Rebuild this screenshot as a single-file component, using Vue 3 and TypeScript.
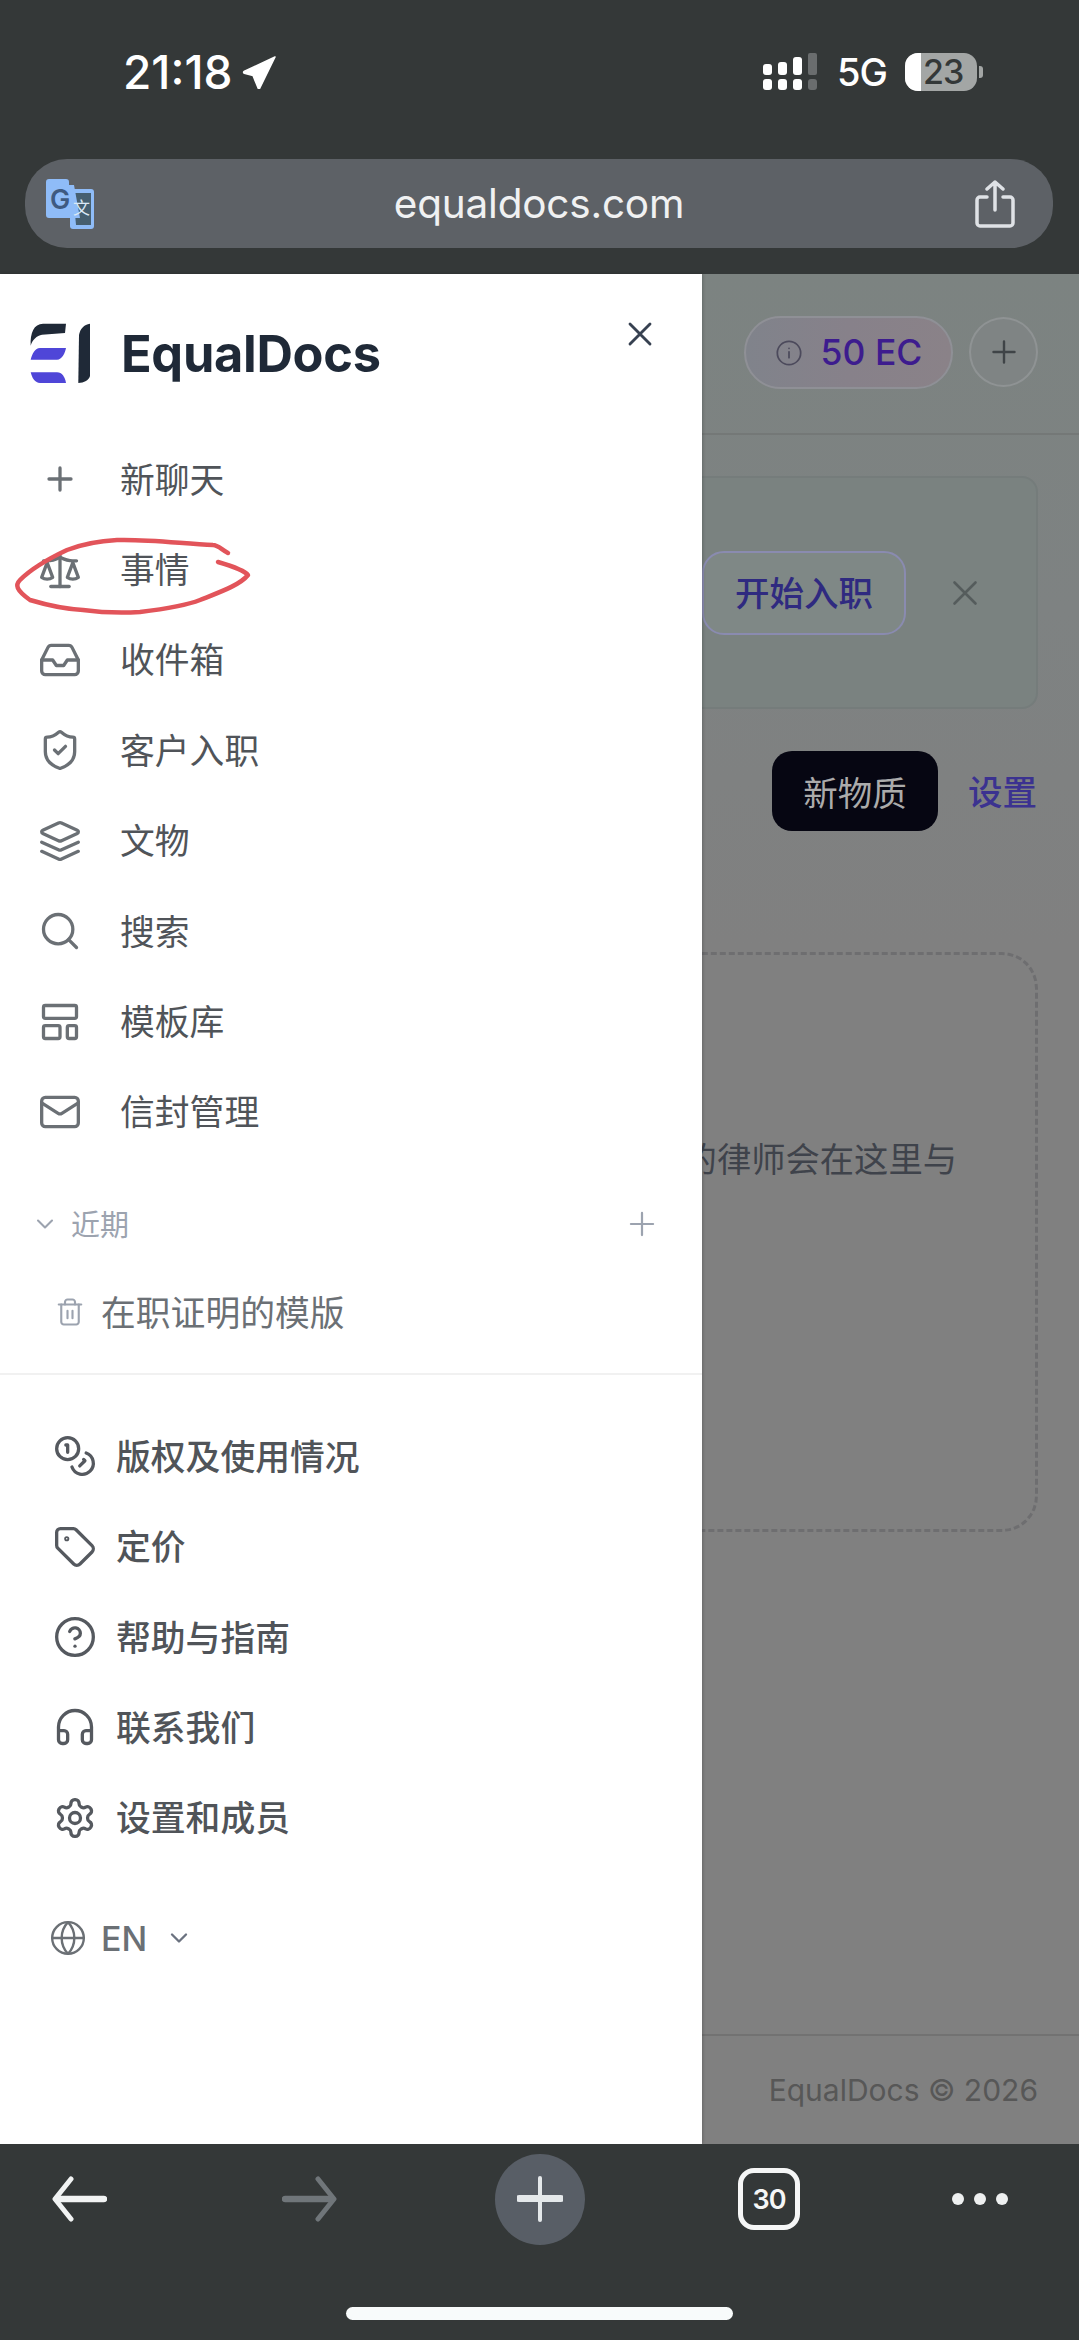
<template>
  <div class="shell">
    <header class="chrome-top">
      <div class="status">
        <div class="status-left">
          <span class="time">21:18</span>
          <svg class="loc" viewBox="0 0 34 33"><path d="M33 1 2 15.500a1 1 0 0 0 .3 1.800L11 19.500l5.200 12.800a.8.8 0 0 0 1.500-.1z" fill="#fff" stroke="#fff" stroke-width="1.500" stroke-linejoin="round" /></svg>
        </div>
        <div class="status-right">
          <svg class="signal" viewBox="0 0 54 38">
            <g fill="#fff">
              <rect x="0" y="11" width="9" height="11" rx="3" />
              <rect x="15" y="9" width="9" height="13" rx="3" />
              <rect x="30" y="4" width="9" height="18" rx="3" />
              <rect x="0" y="26" width="9" height="11" rx="3" />
              <rect x="15" y="26" width="9" height="11" rx="3" />
              <rect x="30" y="26" width="9" height="11" rx="3" />
            </g>
            <g fill="#6a6d6e">
              <rect x="45" y="0" width="9" height="22" rx="2" />
              <rect x="45" y="26" width="9" height="11" rx="3" />
            </g>
          </svg>
          <span class="net">5G</span>
          <div class="battery">
            <div class="battery-body"><span class="battery-fill"></span><span class="battery-num">23</span></div>
            <span class="battery-nub"></span>
          </div>
        </div>
      </div>
      <div class="urlbar">
        <svg class="translate" viewBox="0 0 48 50">
          <path d="M24 10h21a3 3 0 0 1 3 3v34a3 3 0 0 1-3 3H27a3 3 0 0 1-3-3z" fill="#8fbcf8" />
          <path d="M27 14h18v32H30z" fill="#465f70" />
          <path d="M3 0h17a3 3 0 0 1 3 3v3h5l6 33H3a3 3 0 0 1-3-3V3a3 3 0 0 1 3-3z" fill="#8fbcf8" />
          <text x="4" y="30" class="translate-g">G</text>
          <text x="27" y="35" class="translate-w">文</text>
        </svg>
        <span class="url">equaldocs.com</span>
        <svg class="share" viewBox="0 0 40 48" fill="none" stroke="#dfe2e6" stroke-width="3.500" stroke-linecap="round" stroke-linejoin="round">
          <path d="M12 17H5a3 3 0 0 0-3 3v23a3 3 0 0 0 3 3h30a3 3 0 0 0 3-3V20a3 3 0 0 0-3-3h-7" />
          <path d="M20 30V2M12 9l8-7 8 7" />
        </svg>
      </div>
    </header>

    <div class="stage">
      <main class="page">
        <div class="page-head">
          <div class="credits">
            <svg class="info" viewBox="0 0 24 24" fill="none" stroke="#4c4a5c" stroke-width="1.500" stroke-linecap="round">
              <path :d="circle(12, 12, 10)" />
              <path d="M12 16v-5M12 8h.01" />
            </svg>
            <span>50 EC</span>
          </div>
          <button class="round-add">
            <svg viewBox="0 0 24 24" fill="none" stroke="#3f4447" stroke-width="1.600" stroke-linecap="round"><path d="M5 12h14M12 5v14" /></svg>
          </button>
        </div>

        <section class="banner">
          <button class="onboard"><span>开始入职</span></button>
          <svg class="banner-x" viewBox="0 0 24 24" fill="none" stroke="#555c5c" stroke-width="1.500" stroke-linecap="round"><path d="M18 6 6 18M6 6l12 12" /></svg>
        </section>

        <div class="matter-row">
          <button class="new-matter">新物质</button>
          <span class="settings-link">设置</span>
        </div>

        <section class="empty">
          <p>您的律师会在这里与</p>
        </section>

        <footer class="page-foot">EqualDocs © 2026</footer>
      </main>

      <aside class="drawer">
        <div class="drawer-head">
          <div class="brand">
            <svg class="logo" viewBox="0 0 60 61">
              <path d="M13 .7h23L35 10l-23 1.700C7 12.500 2 17 .7 22.700 0 10 4 .7 13 .7z" fill="#1f2937" />
              <path d="M.7 36.700C2 31 5 25 10 25h26c-1 5-4 11.700-9 11.700z" fill="#4f46d8" />
              <path d="M.7 49.300H27c5 0 8 4.700 9 10.700H10C5 60 2 55 .7 49.300z" fill="#4f46d8" />
              <path d="M60 .7V53c-1 4-6 7-11.700 7L49 12C50 6 54 1.500 60 .7z" fill="#1f2937" />
            </svg>
            <span class="brand-name">EqualDocs</span>
          </div>
          <svg class="close" viewBox="0 0 24 24" fill="none" stroke="#374151" stroke-width="1.700" stroke-linecap="round"><path d="M18 6 6 18M6 6l12 12" /></svg>
        </div>

        <nav class="nav">
          <a v-for="item in mainNav" :key="item.label" class="nav-row">
            <svg class="nav-icon" viewBox="0 0 24 24" fill="none" stroke="#6b7075" stroke-width="1.800" stroke-linecap="round" stroke-linejoin="round">
              <path v-for="d in item.icon" :key="d" :d="d" />
            </svg>
            <span>{{ item.label }}</span>
          </a>
        </nav>

        <div class="recent-head">
          <svg class="recent-chev" viewBox="0 0 24 24" fill="none" stroke="#9ca3af" stroke-width="1.800" stroke-linecap="round" stroke-linejoin="round"><path d="m6 9 6 6 6-6" /></svg>
          <span>近期</span>
          <svg class="recent-add" viewBox="0 0 24 24" fill="none" stroke="#9ca3af" stroke-width="1.400" stroke-linecap="round"><path d="M5 12h14M12 5v14" /></svg>
        </div>
        <div class="recent-item">
          <svg class="trash" viewBox="0 0 24 24" fill="none" stroke="#9ca3af" stroke-width="1.700" stroke-linecap="round" stroke-linejoin="round">
            <path v-for="d in icons.trash" :key="d" :d="d" />
          </svg>
          <span>在职证明的模版</span>
        </div>

        <div class="divider"></div>

        <nav class="nav-lower">
          <a v-for="item in lowerNav" :key="item.label" class="lower-row">
            <svg class="nav-icon" viewBox="0 0 24 24" fill="none" stroke="#55595f" stroke-width="1.800" stroke-linecap="round" stroke-linejoin="round">
              <path v-for="d in item.icon" :key="d" :d="d" />
            </svg>
            <span>{{ item.label }}</span>
          </a>
        </nav>

        <div class="lang">
          <svg class="globe" viewBox="0 0 24 24" fill="none" stroke="#6b7075" stroke-width="1.500" stroke-linecap="round" stroke-linejoin="round">
            <path v-for="d in icons.globe" :key="d" :d="d" />
          </svg>
          <span>EN</span>
          <svg class="lang-chev" viewBox="0 0 24 24" fill="none" stroke="#6b7280" stroke-width="2" stroke-linecap="round" stroke-linejoin="round"><path d="m6 9 6 6 6-6" /></svg>
        </div>
      </aside>

      <!-- hand-drawn annotation from the screenshot -->
      <svg class="scribble" viewBox="0 0 260 90" fill="none" stroke="#e2545a" stroke-width="4.500" stroke-linecap="round" stroke-linejoin="round">
        <path d="M228 23C222 20 218 15 213 15 185 14 150 9 117 10 98 11 80 15 67 20 50 28 30 40 20 50 15 55 16 60 30 70 50 76 65 79 83 80 105 83 122 83 140 82 165 79 185 76 200 70 220 62 240 55 248 45 245 41 235 37 218 32" />
      </svg>
    </div>

    <footer class="chrome-bottom">
      <div class="toolbar">
        <svg class="arrow" viewBox="0 0 55 46" fill="none" stroke="#f1f3f3" stroke-linecap="round" stroke-linejoin="round">
          <path d="M19 3 3 23l16 20" stroke-width="5" />
          <path d="M5 23h47" stroke-width="6.500" />
        </svg>
        <svg class="arrow" viewBox="0 0 55 46" fill="none" stroke="#70767a" stroke-linecap="round" stroke-linejoin="round">
          <path d="M36 3l16 20-16 20" stroke-width="5" />
          <path d="M3 23h47" stroke-width="6.500" />
        </svg>
        <div class="new-tab">
          <svg viewBox="0 0 46 46" stroke="#e4e8ea" stroke-linecap="round">
            <path d="M2 22.500h42" stroke-width="7" />
            <path d="M23 2v42" stroke-width="4" />
          </svg>
        </div>
        <div class="tabs">30</div>
        <div class="more"><i></i><i></i><i></i></div>
      </div>
      <div class="home-bar"></div>
    </footer>
  </div>
</template>

<script setup lang="ts">
interface NavItem {
  label: string
  icon: string[]
}

const circle = (cx: number, cy: number, r: number): string =>
  `M${cx - r} ${cy}a${r} ${r} 0 1 0 ${2 * r} 0a${r} ${r} 0 1 0 ${-2 * r} 0z`

const icons: Record<string, string[]> = {
  plus: ['M6 12h12', 'M12 6v12'],
  scale: [
    'm16 16 3-8 3 8c-.87.65-1.92 1-3 1s-2.130-.35-3-1Z',
    'm2 16 3-8 3 8c-.87.65-1.92 1-3 1s-2.130-.35-3-1Z',
    'M7 21h10',
    'M12 3v18',
    'M3 7h2c2 0 5-1 7-2 2 1 5 2 7 2h2'
  ],
  inbox: [
    'M22 12h-6l-2 3h-4l-2-3H2',
    'M5.450 5.110 2 12v6a2 2 0 0 0 2 2h16a2 2 0 0 0 2-2v-6l-3.450-6.890A2 2 0 0 0 16.760 4H7.240a2 2 0 0 0-1.790 1.110z'
  ],
  shield: [
    'M20 13c0 5-3.500 7.500-7.660 8.950a1 1 0 0 1-.67-.01C7.500 20.500 4 18 4 13V6a1 1 0 0 1 1-1c2 0 4.500-1.200 6.240-2.720a1.170 1.170 0 0 1 1.520 0C14.510 3.810 17 5 19 5a1 1 0 0 1 1 1z',
    'm9 12 2 2 4-4'
  ],
  layers: [
    'm12.830 2.180a2 2 0 0 0-1.660 0L2.600 6.080a1 1 0 0 0 0 1.830l8.580 3.910a2 2 0 0 0 1.660 0l8.580-3.900a1 1 0 0 0 0-1.830Z',
    'm22 17.650-9.170 4.160a2 2 0 0 1-1.660 0L2 17.650',
    'm22 12.650-9.170 4.160a2 2 0 0 1-1.660 0L2 12.650'
  ],
  search: [circle(11, 11, 8), 'm21 21-4.300-4.300'],
  template: [
    'M4 3h16a1 1 0 0 1 1 1v5a1 1 0 0 1-1 1H4a1 1 0 0 1-1-1V4a1 1 0 0 1 1-1z',
    'M4 14h7a1 1 0 0 1 1 1v5a1 1 0 0 1-1 1H4a1 1 0 0 1-1-1v-5a1 1 0 0 1 1-1z',
    'M17 14h3a1 1 0 0 1 1 1v5a1 1 0 0 1-1 1h-3a1 1 0 0 1-1-1v-5a1 1 0 0 1 1-1z'
  ],
  mail: [
    'M4 4h16a2 2 0 0 1 2 2v12a2 2 0 0 1-2 2H4a2 2 0 0 1-2-2V6a2 2 0 0 1 2-2z',
    'm22 7-8.970 5.700a1.940 1.940 0 0 1-2.060 0L2 7'
  ],
  trash: [
    'M3 6h18',
    'M19 6v14c0 1-1 2-2 2H7c-1 0-2-1-2-2V6',
    'M8 6V4c0-1 1-2 2-2h4c1 0 2 1 2 2v2',
    'M10 11v6',
    'M14 11v6'
  ],
  coins: [
    circle(8, 8, 6),
    'M18.090 10.370A6 6 0 1 1 10.340 18',
    'M7 6h1v4',
    'm16.710 13.880.7.710-2.820 2.820'
  ],
  tag: [
    'M12.586 2.586A2 2 0 0 0 11.172 2H4a2 2 0 0 0-2 2v7.172a2 2 0 0 0 .586 1.414l8.704 8.704a2.426 2.426 0 0 0 3.420 0l6.580-6.580a2.426 2.426 0 0 0 0-3.420z',
    circle(7.5, 7.5, 0.5)
  ],
  help: [circle(12, 12, 10), 'M9.090 9a3 3 0 0 1 5.830 1c0 2-3 3-3 3', 'M12 17h.01'],
  headphones: [
    'M3 14h3a2 2 0 0 1 2 2v3a2 2 0 0 1-2 2H5a2 2 0 0 1-2-2v-7a9 9 0 0 1 18 0v7a2 2 0 0 1-2 2h-1a2 2 0 0 1-2-2v-3a2 2 0 0 1 2-2h3'
  ],
  settings: [
    'M12.220 2h-.44a2 2 0 0 0-2 2v.18a2 2 0 0 1-1 1.730l-.43.25a2 2 0 0 1-2 0l-.15-.08a2 2 0 0 0-2.730.73l-.22.38a2 2 0 0 0 .73 2.730l.15.1a2 2 0 0 1 1 1.720v.51a2 2 0 0 1-1 1.740l-.15.09a2 2 0 0 0-.73 2.730l.22.38a2 2 0 0 0 2.730.73l.15-.08a2 2 0 0 1 2 0l.43.25a2 2 0 0 1 1 1.730V20a2 2 0 0 0 2 2h.44a2 2 0 0 0 2-2v-.18a2 2 0 0 1 1-1.730l.43-.25a2 2 0 0 1 2 0l.15.08a2 2 0 0 0 2.730-.73l.22-.39a2 2 0 0 0-.73-2.730l-.15-.08a2 2 0 0 1-1-1.740v-.5a2 2 0 0 1 1-1.740l.15-.09a2 2 0 0 0 .73-2.730l-.22-.38a2 2 0 0 0-2.730-.73l-.15.08a2 2 0 0 1-2 0l-.43-.25a2 2 0 0 1-1-1.730V4a2 2 0 0 0-2-2z',
    circle(12, 12, 3)
  ],
  globe: [circle(12, 12, 10), 'M12 2a14.500 14.500 0 0 0 0 20 14.500 14.500 0 0 0 0-20', 'M2 12h20']
}

const mainNav: NavItem[] = [
  { label: '新聊天', icon: icons.plus },
  { label: '事情', icon: icons.scale },
  { label: '收件箱', icon: icons.inbox },
  { label: '客户入职', icon: icons.shield },
  { label: '文物', icon: icons.layers },
  { label: '搜索', icon: icons.search },
  { label: '模板库', icon: icons.template },
  { label: '信封管理', icon: icons.mail }
]

const lowerNav: NavItem[] = [
  { label: '版权及使用情况', icon: icons.coins },
  { label: '定价', icon: icons.tag },
  { label: '帮助与指南', icon: icons.help },
  { label: '联系我们', icon: icons.headphones },
  { label: '设置和成员', icon: icons.settings }
]
</script>

<style scoped>
.shell {
  width: 1079px;
  height: 2340px;
  display: flex;
  flex-direction: column;
  overflow: hidden;
  font-family: Inter, 'Noto Sans CJK SC', sans-serif;
}

/* browser chrome */
.chrome-top {
  height: 274px;
  flex: none;
  background: #343838;
  box-sizing: border-box;
  padding: 53px 26px 0 25px;
  color: #fff;
}
.status {
  height: 38px;
  display: flex;
  justify-content: space-between;
  align-items: center;
}
.status-left {
  display: flex;
  align-items: center;
  gap: 10px;
  margin-left: 98px;
}
.time {
  font-size: 46px;
  font-weight: 500;
  line-height: 38px;
}
.loc {
  width: 34px;
  height: 33px;
}
.status-right {
  display: flex;
  align-items: center;
}
.signal {
  width: 54px;
  height: 38px;
}
.net {
  margin-left: 20px;
  font-size: 38px;
  font-weight: 500;
  line-height: 38px;
  letter-spacing: -1px;
}
.battery {
  display: flex;
  align-items: center;
  margin-left: 18px;
  margin-right: 70px;
}
.battery-body {
  width: 72px;
  height: 38px;
  border-radius: 13px;
  background: #a3a6a5;
  display: flex;
  align-items: center;
  color: #343838;
  font-size: 34px;
  font-weight: 500;
  line-height: 38px;
}
.battery-fill {
  align-self: stretch;
  width: 16px;
  border-radius: 13px 0 0 13px;
  background: #fff;
}
.battery-num {
  margin-left: 2px;
  letter-spacing: -1px;
}
.battery-nub {
  width: 4px;
  height: 12px;
  margin-left: 2px;
  border-radius: 0 3px 3px 0;
  background: #a3a6a5;
}
.urlbar {
  margin-top: 68px;
  height: 89px;
  border-radius: 42px;
  background: #5d6166;
  box-sizing: border-box;
  padding: 0 38px;
  display: grid;
  grid-template-columns: 1fr auto 1fr;
  align-items: center;
}
.translate {
  width: 48px;
  height: 50px;
  margin-left: -17px;
}
.translate-g {
  font-size: 27px;
  font-weight: 600;
  fill: #3f5a80;
}
.translate-w {
  font-size: 17px;
  fill: #dbe8f5;
}
.url {
  font-size: 40.500px;
  color: #f0f1f2;
  letter-spacing: -.2px;
}
.share {
  width: 40px;
  height: 48px;
  justify-self: end;
}

/* page behind the drawer, dimmed */
.stage {
  flex: 1;
  position: relative;
  min-height: 0;
}
.page {
  height: 100%;
  display: flex;
  flex-direction: column;
  background: linear-gradient(180deg, #7c8381 0, #7e8282 18%, #808080 36%);
}
.page-head {
  height: 161px;
  flex: none;
  box-sizing: border-box;
  padding: 42px 41px 0 0;
  border-bottom: 2px solid #747877;
  display: flex;
  justify-content: flex-end;
  align-items: flex-start;
  gap: 16px;
}
.credits {
  width: 209px;
  height: 73px;
  box-sizing: border-box;
  border: 2px solid #8f9096;
  border-radius: 37px;
  background: linear-gradient(90deg, #80838b, #87818a 50%, #8a8288);
  display: flex;
  align-items: center;
  justify-content: center;
  gap: 18px;
  color: #3d1c8e;
  font-size: 35.500px;
  font-weight: 500;
}
.info {
  width: 28px;
  height: 28px;
}
.round-add {
  width: 69px;
  height: 70px;
  padding: 0;
  margin-top: 1px;
  border: 2px solid #8f9394;
  border-radius: 50%;
  background: #7f8484;
  display: flex;
  align-items: center;
  justify-content: center;
}
.round-add svg {
  width: 36px;
  height: 36px;
}
.banner {
  height: 233px;
  flex: none;
  margin: 41px 41px 0 0;
  box-sizing: border-box;
  border: 2px solid #757c7b;
  border-radius: 16px;
  background: #7a8280;
  display: flex;
  align-items: center;
  justify-content: flex-end;
  padding-right: 50px;
}
.onboard {
  width: 204px;
  height: 84px;
  box-sizing: border-box;
  border: 2px solid #8a8bb0;
  border-radius: 22px;
  background: #7f8886;
  color: #2f2a80;
  font: 500 34.500px Inter, 'Noto Sans CJK SC', sans-serif;
  padding: 0;
  margin-right: 38px;
}
.onboard span {
  position: relative;
  top: -2px;
}
.banner-x {
  width: 42px;
  height: 42px;
}
.matter-row {
  flex: none;
  margin: 42px 42px 0 0;
  display: flex;
  justify-content: flex-end;
  align-items: center;
  gap: 30px;
}
.new-matter {
  width: 166px;
  height: 80px;
  border: 0;
  padding: 0;
  border-radius: 20px;
  background: #060612;
  color: #ababab;
  font: 400 34.500px Inter, 'Noto Sans CJK SC', sans-serif;
}
.settings-link {
  color: #3b3290;
  font-size: 34.500px;
  font-weight: 500;
  margin-bottom: 3px;
}
.empty {
  height: 580px;
  flex: none;
  margin: 121px 41px 0 0;
  box-sizing: border-box;
  border: 3px dashed #6e6e70;
  border-radius: 36px;
  padding: 185px 78px 0 0;
}
.empty p {
  margin: 0;
  text-align: right;
  color: #3f434b;
  font-size: 34.300px;
  line-height: 40px;
}
.page-foot {
  margin-top: auto;
  height: 110px;
  flex: none;
  box-sizing: border-box;
  border-top: 2px solid #727272;
  padding: 0 41px 0 0;
  display: flex;
  justify-content: flex-end;
  align-items: center;
  color: #575757;
  font-size: 30px;
}

/* drawer */
.drawer {
  position: absolute;
  left: 0;
  top: 0;
  bottom: 0;
  width: 702px;
  background: #fff;
  box-shadow: 1px 0 3px rgba(0, 0, 0, .2);
  display: flex;
  flex-direction: column;
}
.drawer-head {
  height: 160px;
  flex: none;
  box-sizing: border-box;
  padding: 49px 42px 0 30px;
  display: flex;
  justify-content: space-between;
  align-items: flex-start;
}
.brand {
  display: flex;
  align-items: center;
  gap: 31px;
}
.logo {
  width: 60px;
  height: 61px;
}
.brand-name {
  font-size: 50.500px;
  font-weight: 700;
  color: #1f2937;
  line-height: 61px;
  letter-spacing: -.3px;
}
.close {
  width: 40px;
  height: 40px;
  margin-top: -9px;
}
.nav {
  flex: none;
}
.nav-row {
  height: 90.400px;
  display: flex;
  align-items: center;
  padding-left: 38px;
  gap: 38px;
  color: #505459;
  font-size: 34.800px;
}
.nav-row span,
.lower-row span,
.recent-item span,
.recent-head span {
  margin-bottom: 3px;
}
.nav-icon {
  width: 44px;
  height: 44px;
  flex: none;
}
.recent-head {
  margin-top: 37px;
  height: 60px;
  display: flex;
  align-items: center;
  padding: 0 41px 0 31px;
  gap: 12px;
  color: #9ca3af;
  font-size: 29px;
}
.recent-chev {
  width: 28px;
  height: 28px;
}
.recent-add {
  width: 38px;
  height: 38px;
  margin-left: auto;
}
.recent-item {
  margin-top: 18px;
  height: 80px;
  display: flex;
  align-items: center;
  padding-left: 55px;
  gap: 16px;
  color: #6b7075;
  font-size: 34.800px;
}
.trash {
  width: 30px;
  height: 30px;
}
.divider {
  margin-top: 21px;
  height: 2px;
  background: #f1f1f1;
}
.nav-lower {
  margin-top: 36px;
}
.lower-row {
  height: 90.400px;
  display: flex;
  align-items: center;
  padding-left: 53px;
  gap: 19px;
  color: #505459;
  font-size: 34.800px;
  font-weight: 500;
}
.lang {
  margin-top: 45px;
  height: 60px;
  display: flex;
  align-items: center;
  padding-left: 49px;
  color: #6b7075;
  font-size: 34px;
  font-weight: 500;
}
.globe {
  width: 38px;
  height: 38px;
  margin-right: 14px;
}
.lang-chev {
  width: 28px;
  height: 28px;
  margin-left: 18px;
}
.scribble {
  position: absolute;
  left: 0;
  top: 256px;
  width: 260px;
  height: 90px;
}

/* bottom toolbar */
.chrome-bottom {
  height: 196px;
  flex: none;
  background: #343838;
  position: relative;
}
.toolbar {
  height: 110px;
  display: flex;
  align-items: center;
  position: relative;
}
.arrow {
  width: 55px;
  height: 46px;
  flex: none;
}
.arrow:nth-child(1) {
  margin-left: 52px;
}
.arrow:nth-child(2) {
  margin-left: 175px;
}
.new-tab {
  width: 90px;
  height: 91px;
  flex: none;
  margin-left: 158px;
  border-radius: 50%;
  background: #585e66;
  display: flex;
  align-items: center;
  justify-content: center;
}
.new-tab svg {
  width: 46px;
  height: 46px;
}
.tabs {
  width: 62px;
  height: 62px;
  flex: none;
  margin-left: 153px;
  box-sizing: border-box;
  border: 5px solid #f5f6f6;
  border-radius: 16px;
  color: #f5f6f6;
  font-size: 27px;
  font-weight: 600;
  letter-spacing: -1px;
  display: flex;
  align-items: center;
  justify-content: center;
}
.more {
  flex: none;
  margin-left: 152px;
  display: flex;
  gap: 10px;
}
.more i {
  width: 12px;
  height: 12px;
  border-radius: 50%;
  background: #eef0f0;
}
.home-bar {
  position: absolute;
  left: 346px;
  top: 163px;
  width: 387px;
  height: 13px;
  border-radius: 7px;
  background: #f8fbfb;
}
</style>

<style>
html,
body {
  margin: 0;
  background: #343838;
}
</style>
